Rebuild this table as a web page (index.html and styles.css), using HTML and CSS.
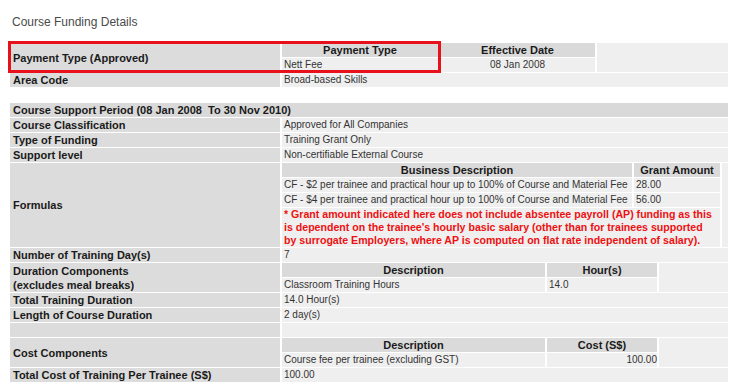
FILE: index.html
```html
<!DOCTYPE html>
<html>
<head>
<meta charset="utf-8">
<title>Course Funding Details</title>
<link rel="stylesheet" href="styles.css">
</head>
<body>
<div class="title">Course Funding Details</div>
<div class="sheet">
  <table class="details">
    <colgroup><col class="c-label"><col></colgroup>
    <tr>
      <th class="lbl">Payment Type (Approved)</th>
      <td class="val nest">
        <table class="inner pay">
          <colgroup><col class="pay1"><col class="pay2"></colgroup>
          <tr><th>Payment Type</th><th>Effective Date</th></tr>
          <tr><td>Nett Fee</td><td class="c">08 Jan 2008</td></tr>
        </table>
      </td>
    </tr>
    <tr><th class="lbl">Area Code</th><td class="val">Broad-based Skills</td></tr>
    <tr class="blank"><td></td><td></td></tr>
    <tr><th class="section" colspan="2">Course Support Period (08 Jan 2008&nbsp; To 30 Nov 2010)</th></tr>
    <tr><th class="lbl">Course Classification</th><td class="val">Approved for All Companies</td></tr>
    <tr><th class="lbl">Type of Funding</th><td class="val">Training Grant Only</td></tr>
    <tr><th class="lbl">Support level</th><td class="val">Non-certifiable External Course</td></tr>
    <tr>
      <th class="lbl">Formulas</th>
      <td class="val nest">
        <table class="inner formula">
          <colgroup><col class="f1"><col class="f2"></colgroup>
          <tr><th>Business Description</th><th>Grant Amount</th></tr>
          <tr><td>CF - $2 per trainee and practical hour up to 100% of Course and Material Fee</td><td>28.00</td></tr>
          <tr><td>CF - $4 per trainee and practical hour up to 100% of Course and Material Fee</td><td>56.00</td></tr>
          <tr><td class="note" colspan="2">* Grant amount indicated here does not include absentee payroll (AP) funding as this<br>is dependent on the trainee's hourly basic salary (other than for trainees supported<br>by surrogate Employers, where AP is computed on flat rate independent of salary).</td></tr>
        </table>
      </td>
    </tr>
    <tr><th class="lbl">Number of Training Day(s)</th><td class="val">7</td></tr>
    <tr>
      <th class="lbl">Duration Components<br>(excludes meal breaks)</th>
      <td class="val nest">
        <table class="inner comp">
          <colgroup><col class="d1"><col class="d2"></colgroup>
          <tr><th>Description</th><th>Hour(s)</th></tr>
          <tr><td>Classroom Training Hours</td><td>14.0</td></tr>
        </table>
      </td>
    </tr>
    <tr><th class="lbl">Total Training Duration</th><td class="val">14.0 Hour(s)</td></tr>
    <tr><th class="lbl">Length of Course Duration</th><td class="val">2 day(s)</td></tr>
    <tr><th class="lbl"></th><td class="val"></td></tr>
    <tr>
      <th class="lbl">Cost Components</th>
      <td class="val nest">
        <table class="inner comp">
          <colgroup><col class="d1"><col class="d2"></colgroup>
          <tr><th>Description</th><th>Cost (S$)</th></tr>
          <tr><td>Course fee per trainee (excluding GST)</td><td class="r">100.00</td></tr>
        </table>
      </td>
    </tr>
    <tr><th class="lbl">Total Cost of Training Per Trainee (S$)</th><td class="val">100.00</td></tr>
  </table>
  <div class="highlight"></div>
</div>
</body>
</html>
```

FILE: styles.css
```css
body {
  margin: 8px;
  background: #ffffff;
  font-family: "Liberation Sans", Arial, sans-serif;
  color: #333333;
}

.title {
  font-size: 12px;
  line-height: 14px;
  color: #4a4a4a;
  padding: 7px 0 0 4px;
  margin-bottom: 13px;
}

.sheet {
  position: relative;
}

.details {
  width: 100%;
  border-collapse: separate;
  border-spacing: 2px 1px;
  table-layout: fixed;
}

.c-label {
  width: 270px;
}

.lbl,
.section {
  background: #dcdcdc;
  color: #1a1a1a;
  font-size: 11px;
  font-weight: bold;
  line-height: 14px;
  height: 14px;
  text-align: left;
  vertical-align: middle;
  padding: 0 3px;
  white-space: nowrap;
}

.section {
  background: #d9d9d9;
}

.val {
  background: #efefef;
  font-size: 10px;
  line-height: 14px;
  height: 14px;
  padding: 0 2px;
  color: #333333;
  vertical-align: middle;
}

.val.nest {
  padding: 0;
  vertical-align: top;
}

.blank td {
  height: 14px;
  padding: 0;
}

.inner {
  border-collapse: separate;
  border-spacing: 0;
  table-layout: fixed;
}

.inner th {
  background: #dadada;
  color: #1a1a1a;
  font-size: 11px;
  font-weight: bold;
  line-height: 14px;
  text-align: center;
  padding: 0;
  border-right: 2px solid #ffffff;
  border-bottom: 1px solid #ffffff;
}

.inner td {
  background: #efefef;
  font-size: 10px;
  line-height: 14px;
  padding: 0 2px;
  color: #333333;
  border-right: 2px solid #ffffff;
  border-bottom: 1px solid #ffffff;
  white-space: nowrap;
}

.inner tr:last-child td {
  border-bottom: 0;
}

.inner td.c {
  text-align: center;
}

.inner td.r {
  text-align: right;
  padding-right: 0;
}

.pay { width: 315px; }
.pay1 { width: 158px; }
.pay2 { width: 157px; }

.formula { width: 440px; }
.f1 { width: 352px; }
.f2 { width: 88px; }

.comp { width: 377px; }
.d1 { width: 265px; }
.d2 { width: 112px; }

.inner td.note {
  color: #ee1111;
  font-size: 10.6px;
  font-weight: bold;
  line-height: 13px;
  white-space: normal;
  padding: 0 2px;
}

.highlight {
  position: absolute;
  left: 0;
  top: -1px;
  width: 433px;
  height: 32px;
  box-sizing: border-box;
  border: 3px solid #e8101a;
  pointer-events: none;
}
```
